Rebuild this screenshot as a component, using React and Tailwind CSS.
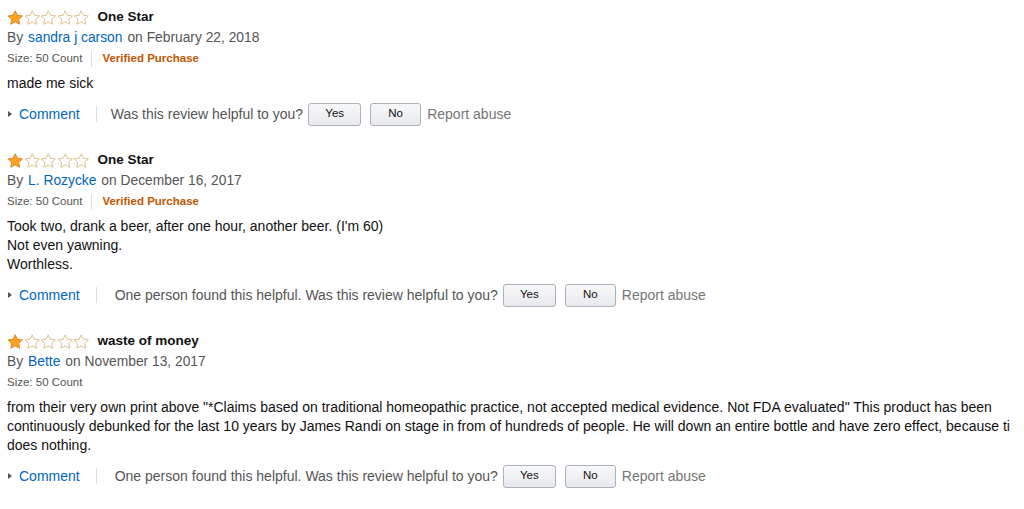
import React from "react";

const reviews = [
  {
    title: "One Star",
    author: "sandra j carson",
    date: "February 22, 2018",
    verified: true,
    body: ["made me sick"],
    helpful: null,
  },
  {
    title: "One Star",
    author: "L. Rozycke",
    date: "December 16, 2017",
    verified: true,
    body: ["Took two, drank a beer, after one hour, another beer. (I'm 60)", "Not even yawning.", "Worthless."],
    helpful: "One person found this helpful.",
  },
  {
    title: "waste of money",
    author: "Bette",
    date: "November 13, 2017",
    verified: false,
    body: [
      "from their very own print above \"*Claims based on traditional homeopathic practice, not accepted medical evidence. Not FDA evaluated\" This product has been",
      "continuously debunked for the last 10 years by James Randi on stage in from of hundreds of people. He will down an entire bottle and have zero effect, because ti",
      "does nothing.",
    ],
    helpful: "One person found this helpful.",
  },
];

function Star({ filled }) {
  return (
    <svg width="16.5" height="15" viewBox="0 0 24 22">
      <path
        d="M12 1.2l3.2 6.6 7.3.9-5.4 5 1.4 7.2L12 17.4l-6.5 3.5 1.4-7.2-5.4-5 7.3-.9z"
        fill={filled ? "#ffa41c" : "#fff"}
        stroke={filled ? "#de7921" : "#d9b77a"}
        strokeWidth="1.3"
        strokeLinejoin="round"
      />
    </svg>
  );
}

function Stars() {
  return (
    <div className="flex">
      <Star filled />
      <Star />
      <Star />
      <Star />
      <Star />
    </div>
  );
}

function Review({ r }) {
  return (
    <div className="mb-[24px]">
      <div className="flex items-center h-[21px]">
        <Stars />
        <span className="ml-[8px] font-bold text-[13.5px] text-[#111]">{r.title}</span>
      </div>
      <div className="h-[21px] flex items-center text-[13.8px] text-[#555]">
        By <span className="text-[#0066c0] ml-[5px] mr-[5px]">{r.author}</span> on {r.date}
      </div>
      <div className="h-[20px] flex items-center text-[11.5px] text-[#555]">
        <span>Size: 50 Count</span>
        {r.verified && (
          <>
            <span className="ml-[9px] mr-[10px] w-px h-[16px] bg-[#ddd]"></span>
            <span className="font-bold text-[#c45500]">Verified Purchase</span>
          </>
        )}
      </div>
      <div className="mt-[5px] text-[14px] leading-[19px] text-[#111]">
        {r.body.map((line, i) => (
          <div key={i} className="whitespace-nowrap">{line}</div>
        ))}
      </div>
      <div className="mt-[9px] h-[24px] flex items-center text-[14px]">
        <span className="ml-[1px] w-0 h-0 border-y-[3px] border-y-transparent border-l-[4px] border-l-[#555]"></span>
        <span className="ml-[7px] text-[#0066c0]">Comment</span>
        <span className="ml-[16px] w-px h-[16px] bg-[#ddd]"></span>
        <span className={(r.helpful ? "ml-[18px]" : "ml-[14px]") + " text-[#555]"}>
          {r.helpful ? r.helpful + " " : ""}Was this review helpful to you?
        </span>
        <button className="ml-[5px] w-[53px] h-[23px] rounded-[3px] border border-[#adb1b8] bg-gradient-to-b from-[#f7f8fa] to-[#e7e9ec] text-[11.5px] text-[#111]">
          Yes
        </button>
        <button className="ml-[9px] w-[51px] h-[23px] rounded-[3px] border border-[#adb1b8] bg-gradient-to-b from-[#f7f8fa] to-[#e7e9ec] text-[11.5px] text-[#111]">
          No
        </button>
        <span className="ml-[6px] text-[#767676]">Report abuse</span>
      </div>
    </div>
  );
}

export default function App() {
  return (
    <div className="w-[1024px] h-[509px] overflow-hidden bg-white pl-[7px] pt-[7px]" style={{ fontFamily: "'Liberation Sans', Arial, sans-serif" }}>
      {reviews.map((r, i) => (
        <Review key={i} r={r} />
      ))}
    </div>
  );
}
